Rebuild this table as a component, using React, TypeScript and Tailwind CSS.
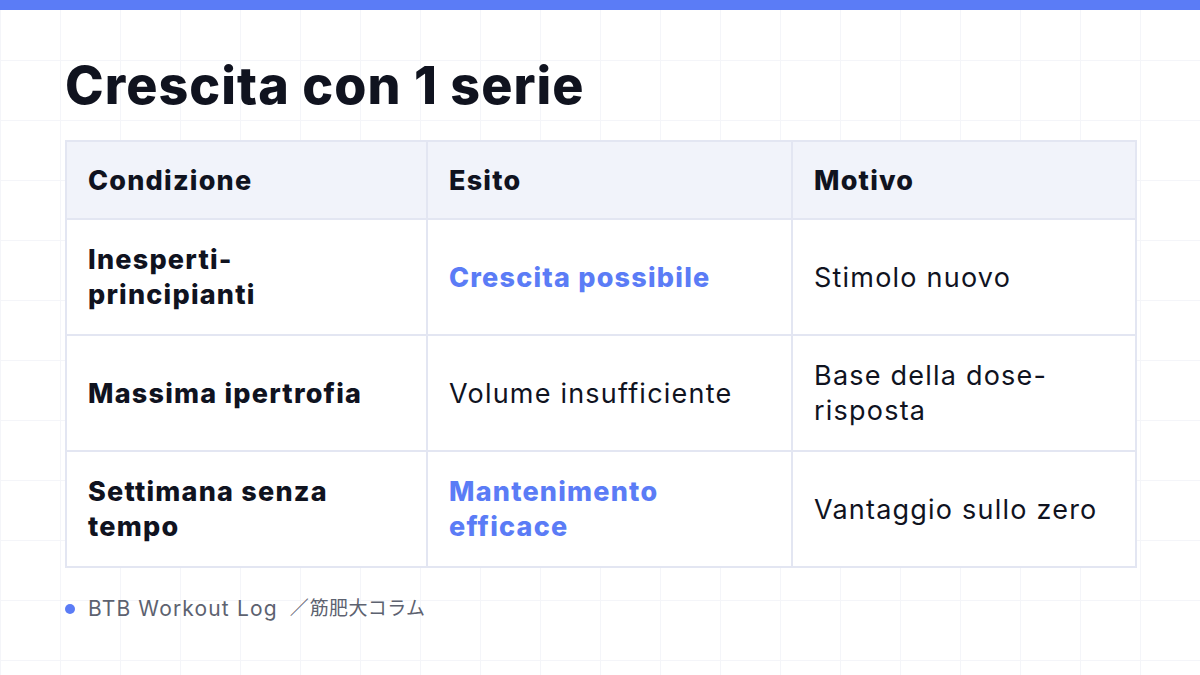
const ROWS = [
  { cond: "Inesperti-\nprincipianti", esito: "Crescita possibile", hi: true, motivo: "Stimolo nuovo" },
  { cond: "Massima ipertrofia", esito: "Volume insufficiente", hi: false, motivo: "Base della dose-\nrisposta" },
  { cond: "Settimana senza\ntempo", esito: "Mantenimento\nefficace", hi: true, motivo: "Vantaggio sullo zero" },
];

const CELL = "border-2 border-[#e3e6f2] pl-[21px] pr-[12px] align-middle whitespace-pre-line";
const BOLD = "font-extrabold tracking-[0.045em]";

export default function App() {
  return (
    <div
      className="relative h-[675px] w-full overflow-hidden bg-white bg-[linear-gradient(to_right,#f4f5f9_1px,transparent_1px),linear-gradient(to_bottom,#f4f5f9_1px,transparent_1px)] bg-size-[60px_60px] text-[#10131f]"
      style={{ fontFamily: 'Inter, "Noto Sans CJK JP", sans-serif' }}
    >
      <div className="h-[10px] bg-[#5b7cf6]" />
      <div className="px-[65px]">
        <h1 className="pt-[45px] text-[52px] font-extrabold leading-[62px] tracking-[0.02em]">
          Crescita con 1 serie
        </h1>
        <table className="mt-[23px] w-[1070px] table-fixed border-collapse bg-white text-[27px] leading-[35px]">
          <colgroup>
            <col className="w-[361px]" />
            <col className="w-[365px]" />
            <col className="w-[344px]" />
          </colgroup>
          <thead>
            <tr className="h-[78px] bg-[#f1f3fa]">
              <th className={`${CELL} ${BOLD} text-left`}>Condizione</th>
              <th className={`${CELL} ${BOLD} text-left`}>Esito</th>
              <th className={`${CELL} ${BOLD} text-left`}>Motivo</th>
            </tr>
          </thead>
          <tbody>
            {ROWS.map((r) => (
              <tr key={r.cond} className="h-[116px]">
                <td className={`${CELL} ${BOLD}`}>{r.cond}</td>
                <td className={`${CELL} ${r.hi ? `${BOLD} text-[#5b7cf6]` : "font-normal tracking-[0.045em]"}`}>
                  {r.esito}
                </td>
                <td className={`${CELL} font-normal tracking-[0.045em]`}>{r.motivo}</td>
              </tr>
            ))}
          </tbody>
        </table>
        <div className="mt-[26px] flex h-[30px] items-center text-[#5d6270]">
          <span className="h-[10px] w-[10px] shrink-0 rounded-full bg-[#5b7cf6]" />
          <span className="ml-[13px] text-[21px] tracking-[0.055em]">BTB Workout Log</span>
          <span className="ml-[12px] text-[19px]">／</span>
          <span className="ml-[1px] text-[19px] tracking-[0.02em]">筋肥大コラム</span>
        </div>
      </div>
    </div>
  );
}
